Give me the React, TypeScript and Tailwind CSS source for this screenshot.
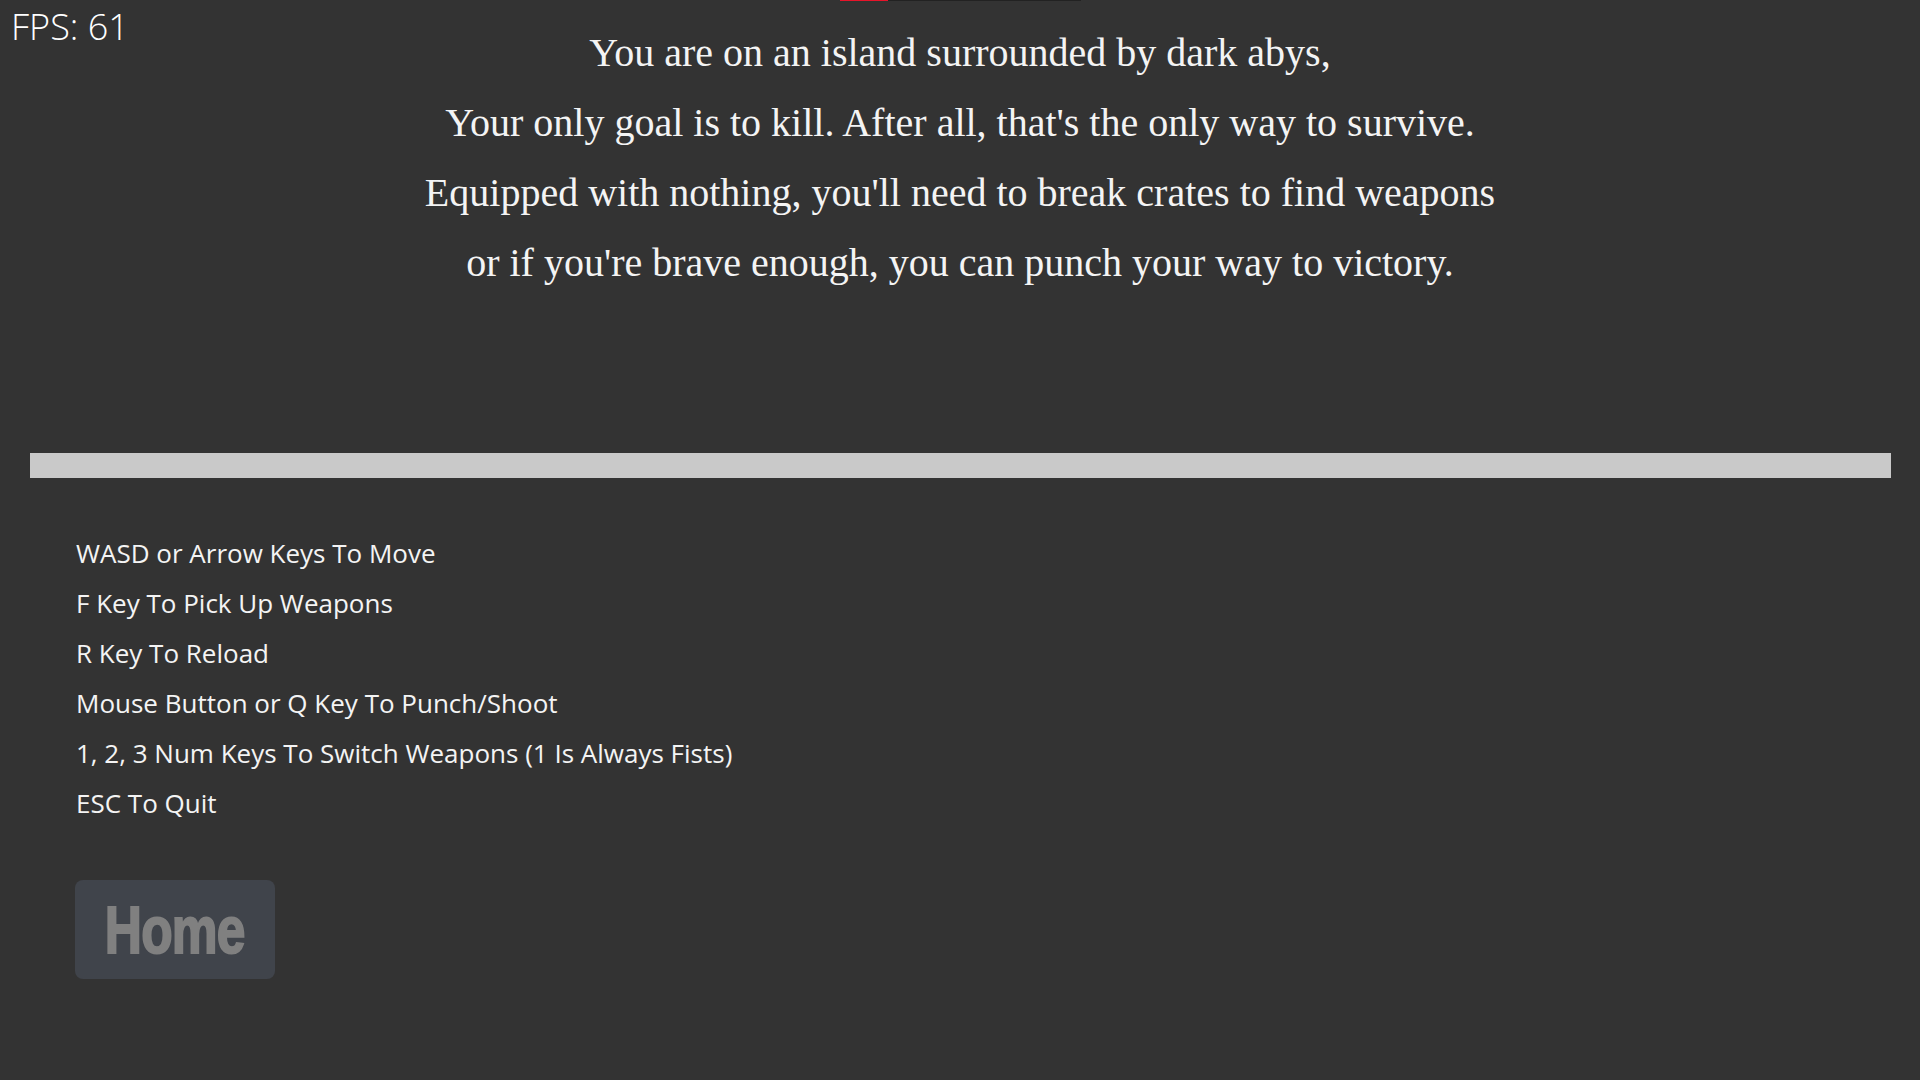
import React from 'react';

const story = [
  'You are on an island surrounded by dark abys,',
  "Your only goal is to kill. After all, that's the only way to survive.",
  "Equipped with nothing, you'll need to break crates to find weapons",
  "or if you're brave enough, you can punch your way to victory.",
];

const controls = [
  'WASD or Arrow Keys To Move',
  'F Key To Pick Up Weapons',
  'R Key To Reload',
  'Mouse Button or Q Key To Punch/Shoot',
  '1, 2, 3 Num Keys To Switch Weapons (1 Is Always Fists)',
  'ESC To Quit',
];

export default function App() {
  return (
    <div className="relative w-full h-screen overflow-hidden bg-[#333333] font-['Open_Sans','Noto_Sans',sans-serif] text-white">
      {/* fps counter overlay */}
      <div className="absolute left-[11px] top-[3px] text-[36px] font-light leading-[48px]">
        FPS: 61
      </div>

      {/* health bar, mostly off screen */}
      <div className="flex justify-center">
        <div className="flex w-[241px] h-[1px] bg-[#222222]">
          <div className="w-[48px] bg-[#e8142a]" />
        </div>
      </div>

      <div className="mt-[17px] flex flex-col items-center font-['Liberation_Serif',serif] text-[40px] leading-[70px] text-[#f4f4f4]">
        {story.map(line => (
          <p key={line}>{line}</p>
        ))}
      </div>

      <div className="ml-[30px] mt-[155px] w-[1861px] h-[25px] bg-[#c9c9c9]" />

      <div className="ml-[76px] mt-[50px] flex flex-col text-[26px] font-normal leading-[50px] text-[#f4f4f4]">
        {controls.map(c => (
          <p key={c}>{c}</p>
        ))}
      </div>

      <button className="ml-[75px] mt-[52px] w-[200px] h-[99px] rounded-lg bg-[#40444b] flex items-center justify-center">
        <span className="inline-block scale-x-[0.78] font-['Liberation_Sans',sans-serif] font-bold text-[66px] leading-none text-[#808080] tracking-[-1px] [-webkit-text-stroke:2px_#808080]">
          Home
        </span>
      </button>
    </div>
  );
}
